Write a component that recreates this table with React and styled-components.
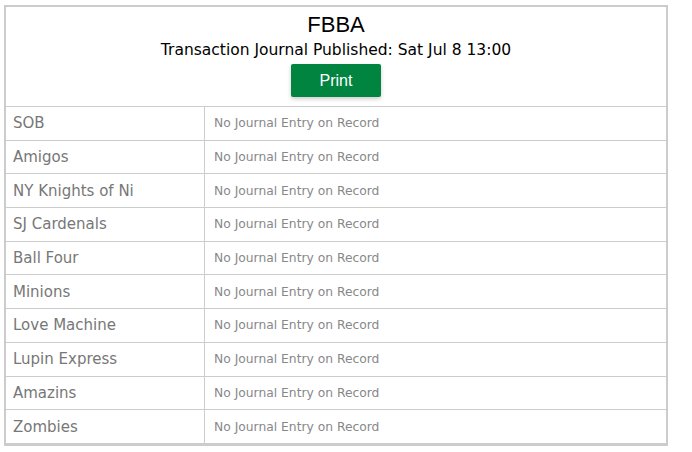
import styled, { createGlobalStyle } from "styled-components";

const GlobalStyle = createGlobalStyle`
  body {
    margin: 0;
    background: #fff;
    font-family: "DejaVu Sans", Verdana, sans-serif;
  }
`;

const Journal = styled.div`
  margin: 5px 0 0 4px;
  width: 660px;
  border: 2px solid #ccc;
  border-bottom-width: 3px;
  background: #fff;
`;

const Header = styled.div`
  display: flex;
  flex-direction: column;
  align-items: center;
  height: 99px;
  box-sizing: border-box;
  padding-top: 6px;
`;

const League = styled.h1`
  margin: 0;
  font-family: "Liberation Sans", Arial, sans-serif;
  font-weight: normal;
  font-size: 22px;
  line-height: 24px;
  color: #000;
`;

const Published = styled.div`
  margin-top: 4px;
  font-size: 15.5px;
  line-height: 18px;
  color: #000;
`;

const PrintButton = styled.button`
  margin-top: 5px;
  width: 90px;
  height: 33px;
  border: none;
  border-radius: 2px;
  background: #00843f;
  color: #fff;
  font-family: "Liberation Sans", Arial, sans-serif;
  font-size: 16px;
  box-shadow: 0 2px 4px rgba(0, 0, 0, 0.2);
  cursor: pointer;
`;

const Table = styled.table`
  width: 100%;
  border-collapse: collapse;
`;

const Row = styled.tr`
  height: 33.7px;
  border-top: 1px solid #ccc;
`;

const TeamCell = styled.td`
  width: 183px;
  padding: 0 8px 0 7px;
  border-right: 1px solid #ccc;
  font-size: 15px;
  color: #777;
`;

const EntryCell = styled.td`
  padding: 0 9px;
  font-size: 12.3px;
  color: #888;
`;

const teams = [
  "SOB",
  "Amigos",
  "NY Knights of Ni",
  "SJ Cardenals",
  "Ball Four",
  "Minions",
  "Love Machine",
  "Lupin Express",
  "Amazins",
  "Zombies",
];

export default function App() {
  return (
    <>
      <GlobalStyle />
      <Journal>
        <Header>
          <League>FBBA</League>
          <Published>Transaction Journal Published: Sat Jul 8 13:00</Published>
          <PrintButton>Print</PrintButton>
        </Header>
        <Table>
          <tbody>
            {teams.map((team) => (
              <Row key={team}>
                <TeamCell>{team}</TeamCell>
                <EntryCell>No Journal Entry on Record</EntryCell>
              </Row>
            ))}
          </tbody>
        </Table>
      </Journal>
    </>
  );
}
